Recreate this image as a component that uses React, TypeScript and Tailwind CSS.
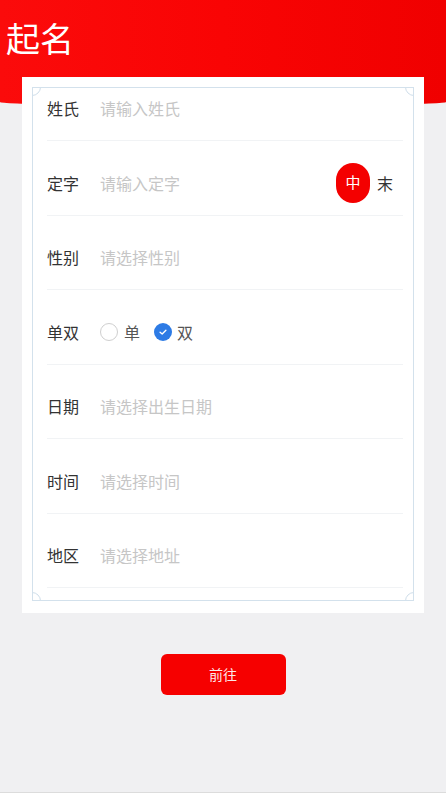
import React from 'react';

const font = { fontFamily: '"Noto Sans CJK SC", "Noto Sans", sans-serif' };

const Corner: React.FC<{ pos: string }> = ({ pos }) => (
  <span
    className={`absolute w-[18px] h-[18px] rounded-full bg-white border border-[#cfdeea] ${pos}`}
  />
);

const Row: React.FC<{ label: string; first?: boolean; children: React.ReactNode }> = ({
  label,
  first,
  children,
}) => (
  <div
    className={`flex items-end ml-[14px] mr-[10px] border-b border-[#f1f3f5] pb-[20px] ${
      first ? 'h-[53px]' : 'h-[74.5px]'
    }`}
  >
    <span className="w-[53px] shrink-0 text-[16px] leading-6 text-[#333]">{label}</span>
    <div className="flex flex-1 items-center">{children}</div>
  </div>
);

const Placeholder: React.FC<{ text: string }> = ({ text }) => (
  <span className="text-[16px] leading-6 text-[#c6c6c6]">{text}</span>
);

export default function App() {
  return (
    <div className="relative w-[446px] h-[796px] overflow-hidden bg-[#f0f0f2]" style={font}>
      <div className="h-[106px] bg-linear-to-r from-[#fb0b0b] via-[#f90404] to-[#f00000] rounded-b-[50%_4px] pl-[6px] pt-[14px]">
        <h1 className="text-[34px] leading-[48px] text-white">起名</h1>
      </div>

      <div className="mx-[22px] -mt-[29px] relative bg-white pt-[10px] pl-[10px] pr-[10px] pb-[12px]">
        <div className="relative overflow-hidden border border-[#d3e1ec] pb-[12px]">
          <Corner pos="-top-[10px] -left-[10px]" />
          <Corner pos="-top-[10px] -right-[10px]" />
          <Corner pos="-bottom-[10px] -left-[10px]" />
          <Corner pos="-bottom-[10px] -right-[10px]" />

          <Row label="姓氏" first>
            <Placeholder text="请输入姓氏" />
          </Row>
          <Row label="定字">
            <Placeholder text="请输入定字" />
            <div className="ml-auto flex items-center mr-[10px]">
              <span className="flex items-center justify-center w-[34px] h-[40px] rounded-full bg-[#f40000] text-white text-[15px] -my-[8px]">
                中
              </span>
              <span className="ml-[7px] text-[16px] leading-6 text-[#333]">末</span>
            </div>
          </Row>
          <Row label="性别">
            <Placeholder text="请选择性别" />
          </Row>
          <Row label="单双">
            <label className="flex items-center">
              <span className="w-[18px] h-[18px] rounded-full border border-[#cfcfcf] bg-white" />
              <span className="ml-[6px] text-[16px] leading-6 text-[#555]">单</span>
            </label>
            <label className="flex items-center ml-[14px]">
              <span className="flex items-center justify-center w-[18px] h-[18px] rounded-full bg-[#2d7be5]">
                <svg viewBox="0 0 12 12" className="w-[10px] h-[10px]">
                  <path
                    d="M2.5 6.2 L5 8.5 L9.5 3.8"
                    fill="none"
                    stroke="white"
                    strokeWidth="1.6"
                    strokeLinecap="round"
                    strokeLinejoin="round"
                  />
                </svg>
              </span>
              <span className="ml-[5px] text-[16px] leading-6 text-[#555]">双</span>
            </label>
          </Row>
          <Row label="日期">
            <Placeholder text="请选择出生日期" />
          </Row>
          <Row label="时间">
            <Placeholder text="请选择时间" />
          </Row>
          <Row label="地区">
            <Placeholder text="请选择地址" />
          </Row>
        </div>
      </div>

      <div className="flex justify-center mt-[41px]">
        <button className="w-[125px] h-[41px] rounded-[6px] bg-[#f60000] text-[14px] text-[#fde8e8]">
          前往
        </button>
      </div>

      <div className="absolute left-0 right-0 bottom-0 h-[4px] border-t border-[#dcdcdc] bg-white" />
    </div>
  );
}
